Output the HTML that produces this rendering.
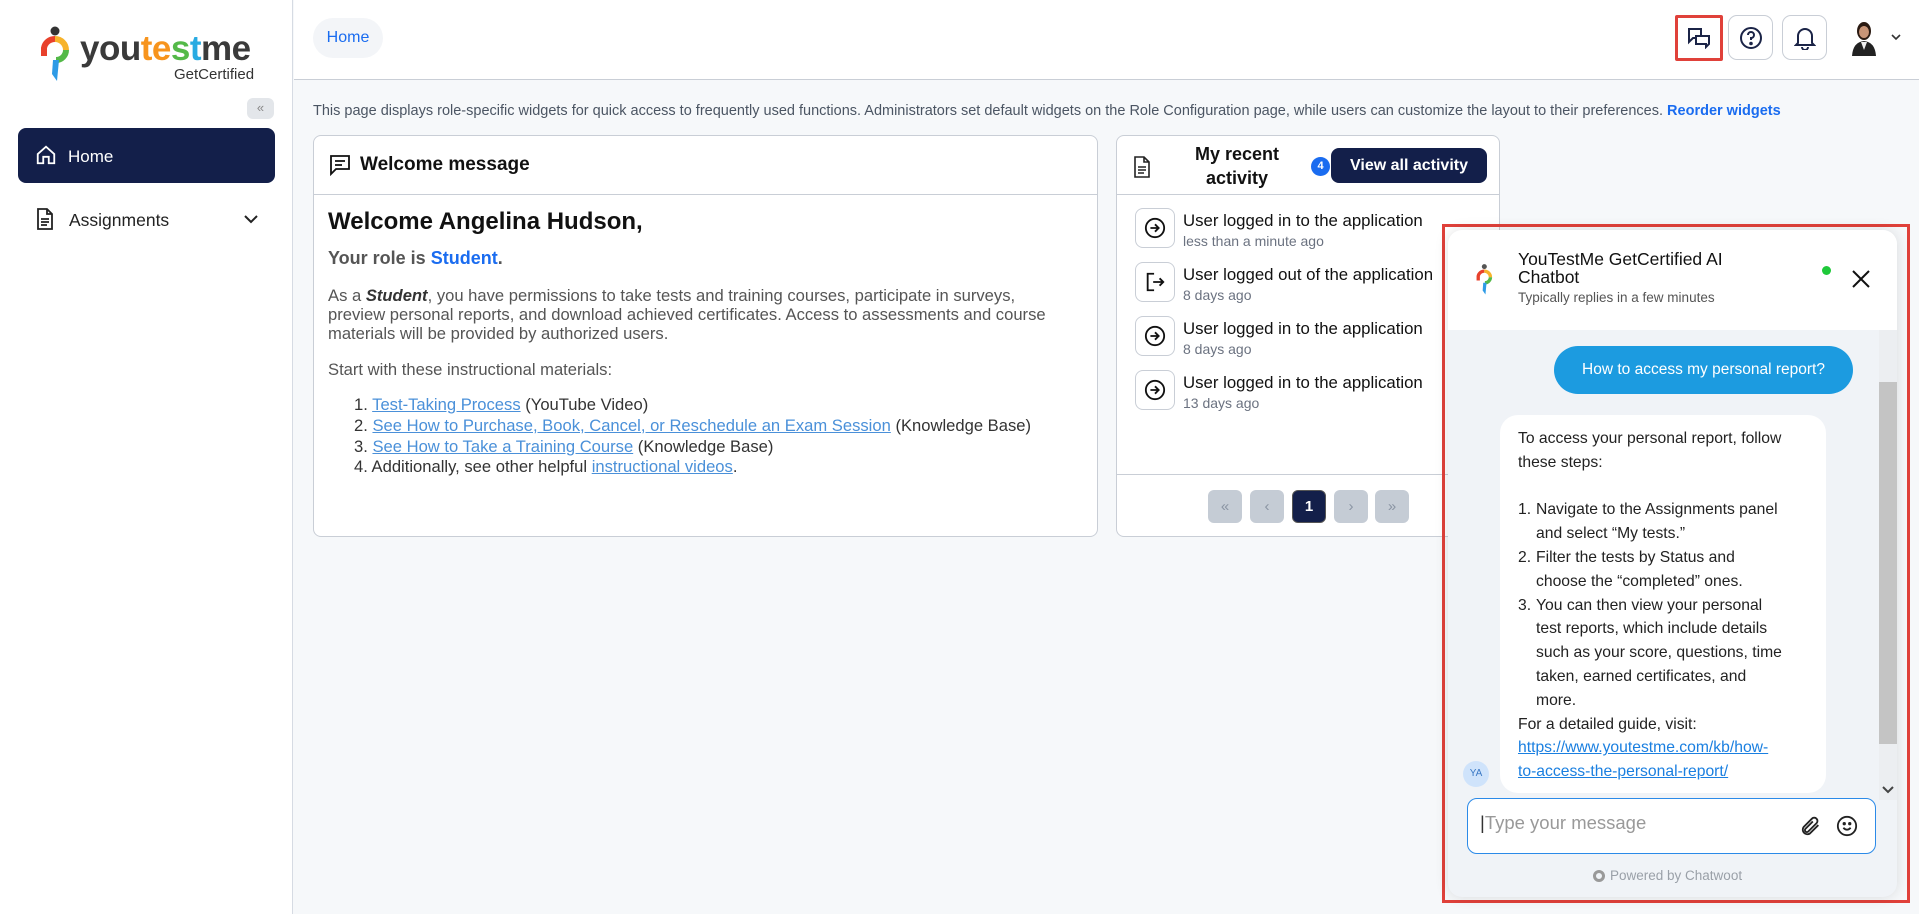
<!DOCTYPE html>
<html><head><meta charset="utf-8"><style>
*{box-sizing:border-box;margin:0;padding:0}
body{width:1919px;height:914px;overflow:hidden;background:#f6f8fa;font-family:"Liberation Sans",Arial,sans-serif;color:#111;position:relative}
.abs{position:absolute}
a{color:#4a90d9;text-decoration:underline}
.side{left:0;top:0;width:293px;height:914px;background:#fff;border-right:1px solid #d6dbe3}
.hdr{left:294px;top:0;right:0;height:80px;background:#fff;border-bottom:1px solid #c9ced6}
.ib{width:45px;height:45px;border:1px solid #c9ced6;border-radius:9px;background:#fff;display:flex;align-items:center;justify-content:center}
.card{background:#fff;border:1px solid #c9ced6;border-radius:8px}
.act{position:absolute;left:18px}
.act .bx{position:absolute;left:0;top:0;width:40px;height:40px;border:1px solid #c9ced6;border-radius:8px;display:flex;align-items:center;justify-content:center}
.act .t{position:absolute;left:48px;top:3px;font-size:16.8px;white-space:nowrap;color:#111}
.act .s{position:absolute;left:48px;top:25px;font-size:14px;color:#6b7280;white-space:nowrap}
.pg{position:absolute;top:490px;width:34px;height:33px;border-radius:6px;background:#c5ccd5;color:#8a94a3;display:flex;align-items:center;justify-content:center;font-size:15px}
.li{display:flex}.li span:first-child{width:18px;flex:none}
</style></head><body>
<div class="abs side">
  <svg class="abs" style="left:40px;top:26px" width="36" height="58" viewBox="0 0 36 58"><circle cx="15" cy="5" r="4.5" fill="#333"/><path d="M4 30 V22 A11 11 0 0 1 15 13" stroke="#e8412c" stroke-width="6" fill="none"/><path d="M15 13 A11 11 0 0 1 26 24" stroke="#f7b32b" stroke-width="6" fill="none"/><path d="M26 24 A10 10 0 0 1 16 34" stroke="#54b948" stroke-width="6" fill="none"/><path d="M13 34 L19 34 L17 55 L12 48Z" fill="#2e9be6"/></svg>
  <div class="abs" style="left:80px;top:29px;font-size:35px;font-weight:bold;letter-spacing:-0.5px;color:#3a3a3a">you<span style="color:#f7941d">te</span><span style="color:#54b948">s</span><span style="color:#29abe2">t</span>me</div>
  <div class="abs" style="left:174px;top:66px;font-size:15px;color:#333">GetCertified</div>
  <div class="abs" style="left:247px;top:98px;width:27px;height:21px;background:#e3e6ea;border-radius:6px;color:#888;font-size:13px;text-align:center;line-height:20px">«</div>
  <div class="abs" style="left:18px;top:128px;width:257px;height:55px;background:#131f4a;border-radius:8px"></div>
  <svg class="abs" style="left:35px;top:144px" width="22" height="22" viewBox="0 0 24 24" fill="none" stroke="#fff" stroke-width="2"><path d="M3 11 L12 3 L21 11 V21 H15 V14 H9 V21 H3Z"/></svg>
  <div class="abs" style="left:68px;top:147px;color:#fff;font-size:17px">Home</div>
  <svg class="abs" style="left:35px;top:208px" width="20" height="22" viewBox="0 0 20 22" fill="none" stroke="#222" stroke-width="1.8"><path d="M3 1 H12 L17 6 V21 H3Z M12 1 V6 H17 M6 11 H14 M6 14 H14 M6 17 H12"/></svg>
  <div class="abs" style="left:69px;top:210px;font-size:17.5px;color:#222">Assignments</div>
  <svg class="abs" style="left:243px;top:214px" width="16" height="10" viewBox="0 0 16 10" fill="none" stroke="#222" stroke-width="2"><path d="M2 2 L8 8 L14 2"/></svg>
</div>
<div class="abs hdr"></div>
<div class="abs" style="left:313px;top:18px;width:70px;height:40px;background:#f3f5f8;border-radius:20px;color:#1a6cf0;font-size:16px;text-align:center;line-height:40px">Home</div>
<div class="abs ib" style="left:1675px;top:15px;border:3px solid #e0413a;border-radius:2px;width:48px;height:46px"><svg width="24" height="22" viewBox="0 0 24 22" fill="none" stroke="#1b2447" stroke-width="2"><path d="M2 2 H14 V11 H6 L2 15Z"/><path d="M9 9 H22 V17 L19 20 V17 H9Z" fill="#fff"/></svg></div>
<div class="abs ib" style="left:1728px;top:15px"><svg width="24" height="24" viewBox="0 0 24 24" fill="none" stroke="#1b2447" stroke-width="2"><circle cx="12" cy="12" r="10"/><path d="M9 9 A3 3 0 1 1 12 12 V14"/><circle cx="12" cy="17.5" r="0.8" fill="#1b2447"/></svg></div>
<div class="abs ib" style="left:1782px;top:15px"><svg width="22" height="24" viewBox="0 0 22 24" fill="none" stroke="#1b2447" stroke-width="2"><path d="M4 17 V10 A7 7 0 0 1 18 10 V17 L20 19 H2Z M8 21 A3 3 0 0 0 14 21"/></svg></div>
<svg class="abs" style="left:1850px;top:20px" width="28" height="36" viewBox="0 0 28 36"><ellipse cx="14" cy="11" rx="7" ry="9" fill="#2a1a12"/><ellipse cx="14" cy="12" rx="5" ry="6" fill="#c99577"/><path d="M2 36 Q3 22 14 21 Q25 22 26 36Z" fill="#222"/><path d="M11 22 L14 30 L17 22Z" fill="#eee"/></svg>
<svg class="abs" style="left:1891px;top:34px" width="10" height="7" viewBox="0 0 10 7" fill="none" stroke="#333" stroke-width="1.6"><path d="M1 1 L5 5 L9 1"/></svg>
<div class="abs" style="left:313px;top:103px;font-size:14.5px;color:#4b5563;white-space:nowrap">This page displays role-specific widgets for quick access to frequently used functions. Administrators set default widgets on the Role Configuration page, while users can customize the layout to their preferences. <span style="color:#1a6cf0;font-weight:bold">Reorder widgets</span></div>

<div class="abs card" style="left:313px;top:135px;width:785px;height:402px">
  <div style="height:59px;border-bottom:1px solid #c9ced6;position:relative">
    <svg class="abs" style="left:15px;top:18px" width="22" height="22" viewBox="0 0 22 22" fill="none" stroke="#111" stroke-width="1.8"><path d="M2 2 H20 V15 H7 L2 20Z M6 7 H16 M6 11 H13"/></svg>
    <div class="abs" style="left:46px;top:18px;font-size:19px;font-weight:bold">Welcome message</div>
  </div>
  <div class="abs" style="left:14px;top:72px;font-size:24px;font-weight:bold;color:#111">Welcome Angelina Hudson,</div>
  <div class="abs" style="left:14px;top:112px;font-size:18px;font-weight:bold;color:#555">Your role is <span style="color:#1a6cf0">Student</span>.</div>
  <div class="abs" style="left:14px;top:150px;width:745px;font-size:16.6px;line-height:19px;color:#555">As a <b><i style="color:#333">Student</i></b>, you have permissions to take tests and training courses, participate in surveys, preview personal reports, and download achieved certificates. Access to assessments and course materials will be provided by authorized users.</div>
  <div class="abs" style="left:14px;top:224px;font-size:16.6px;color:#555">Start with these instructional materials:</div>
  <div class="abs" style="left:40px;top:259px;font-size:16.6px;line-height:20.8px;color:#333">
    <div>1. <a>Test-Taking Process</a> (YouTube Video)</div>
    <div>2. <a>See How to Purchase, Book, Cancel, or Reschedule an Exam Session</a> (Knowledge Base)</div>
    <div>3. <a>See How to Take a Training Course</a> (Knowledge Base)</div>
    <div>4. Additionally, see other helpful <a>instructional videos</a>.</div>
  </div>
</div>

<div class="abs card" style="left:1116px;top:135px;width:384px;height:402px">
  <div style="height:59px;border-bottom:1px solid #c9ced6;position:relative">
    <svg class="abs" style="left:16px;top:20px" width="18" height="22" viewBox="0 0 18 22" fill="none" stroke="#222" stroke-width="1.6"><path d="M2 1 H11 L16 6 V21 H2Z M11 1 V6 H16 M5 11 H13 M5 14 H13 M5 17 H11"/></svg>
    <div class="abs" style="left:50px;top:6px;width:140px;text-align:center;font-size:18px;font-weight:bold;line-height:24px">My recent<br>activity</div>
    <div class="abs" style="left:194px;top:21px;width:19px;height:19px;border-radius:50%;background:#1a6cf0;color:#fff;font-size:11px;font-weight:bold;text-align:center;line-height:19px">4</div>
    <div class="abs" style="left:214px;top:12px;width:156px;height:35px;border-radius:8px;background:#131f4a;color:#fff;font-size:16px;font-weight:bold;text-align:center;line-height:35px">View all activity</div>
  </div>
  <div class="act" style="top:72px"><div class="bx"><svg width="22" height="22" viewBox="0 0 24 24" fill="none" stroke="#111" stroke-width="2"><circle cx="12" cy="12" r="10"/><path d="M7 12 H16 M12 8 L16 12 L12 16"/></svg></div><div class="t">User logged in to the application</div><div class="s">less than a minute ago</div></div>
  <div class="act" style="top:126px"><div class="bx"><svg width="22" height="22" viewBox="0 0 24 24" fill="none" stroke="#111" stroke-width="2"><path d="M11 3 H4 V21 H11 M10 12 H21 M17 8 L21 12 L17 16"/></svg></div><div class="t">User logged out of the application</div><div class="s">8 days ago</div></div>
  <div class="act" style="top:180px"><div class="bx"><svg width="22" height="22" viewBox="0 0 24 24" fill="none" stroke="#111" stroke-width="2"><circle cx="12" cy="12" r="10"/><path d="M7 12 H16 M12 8 L16 12 L12 16"/></svg></div><div class="t">User logged in to the application</div><div class="s">8 days ago</div></div>
  <div class="act" style="top:234px"><div class="bx"><svg width="22" height="22" viewBox="0 0 24 24" fill="none" stroke="#111" stroke-width="2"><circle cx="12" cy="12" r="10"/><path d="M7 12 H16 M12 8 L16 12 L12 16"/></svg></div><div class="t">User logged in to the application</div><div class="s">13 days ago</div></div>
  <div class="abs" style="left:0;right:0;top:338px;border-top:1px solid #c9ced6"></div>
</div>
<div class="pg" style="left:1208px">«</div>
<div class="pg" style="left:1250px">‹</div>
<div class="pg" style="left:1292px;background:#131f4a;color:#fff;font-weight:bold;border:1px solid #555">1</div>
<div class="pg" style="left:1334px">›</div>
<div class="pg" style="left:1375px">»</div>

<div class="abs" style="left:1442px;top:224px;width:468px;height:679px;border:3px solid #e0413a"></div>
<div class="abs" style="left:1448px;top:230px;width:449px;height:667px;background:#f0f3f7;border-radius:14px;overflow:hidden;box-shadow:0 0 14px rgba(0,0,0,.12)">
  <div class="abs" style="left:0;top:0;width:449px;height:100px;background:#fff"></div>
  <svg class="abs" style="left:28px;top:33px" width="20" height="34" viewBox="0 0 36 58"><circle cx="15" cy="5" r="4.5" fill="#555"/><path d="M4 30 V22 A11 11 0 0 1 15 13" stroke="#e8412c" stroke-width="6" fill="none"/><path d="M15 13 A11 11 0 0 1 26 24" stroke="#f7b32b" stroke-width="6" fill="none"/><path d="M26 24 A10 10 0 0 1 16 34" stroke="#54b948" stroke-width="6" fill="none"/><path d="M13 34 L19 34 L17 55 L12 48Z" fill="#2e9be6"/></svg>
  <div class="abs" style="left:70px;top:20px;font-size:17.5px;line-height:18px;color:#111">YouTestMe GetCertified AI<br>Chatbot</div>
  <div class="abs" style="left:70px;top:60px;font-size:13.5px;color:#555">Typically replies in a few minutes</div>
  <div class="abs" style="left:374px;top:36px;width:9px;height:9px;border-radius:50%;background:#1fc93a"></div>
  <svg class="abs" style="left:404px;top:40px" width="18" height="18" viewBox="0 0 18 18" stroke="#111" stroke-width="2"><path d="M1 1 L17 17 M17 1 L1 17"/></svg>
  <div class="abs" style="left:431px;top:100px;width:18px;height:470px;background:#eceef1"></div>
  <div class="abs" style="left:431px;top:152px;width:18px;height:362px;background:#c4c4c4"></div>
  <svg class="abs" style="left:434px;top:556px" width="12" height="8" viewBox="0 0 12 8" fill="none" stroke="#444" stroke-width="2"><path d="M1 1 L6 6 L11 1"/></svg>
  <div class="abs" style="left:106px;top:116px;width:299px;height:48px;border-radius:24px;background:#1c9be0;color:#fff;font-size:15.5px;text-align:center;line-height:48px">How to access my personal report?</div>
  <div class="abs" style="left:52px;top:185px;width:326px;height:378px;background:#fff;border-radius:18px;font-size:15.7px;line-height:23.8px;color:#222;padding:12px 18px">
    To access your personal report, follow<br>these steps:<br><br>
    <div class="li"><span>1.</span><span>Navigate to the Assignments panel<br>and select “My tests.”</span></div>
    <div class="li"><span>2.</span><span>Filter the tests by Status and<br>choose the “completed” ones.</span></div>
    <div class="li"><span>3.</span><span>You can then view your personal<br>test reports, which include details<br>such as your score, questions, time<br>taken, earned certificates, and<br>more.</span></div>
    For a detailed guide, visit:<br><a style="color:#1a7fe0">https://www.youtestme.com/kb/how-<br>to-access-the-personal-report/</a>
  </div>
  <div class="abs" style="left:15px;top:531px;width:26px;height:26px;border-radius:50%;background:#cfe3fb;color:#3a78c4;font-size:10px;text-align:center;line-height:26px">YA</div>
  <div class="abs" style="left:19px;top:568px;width:409px;height:56px;background:#fff;border:1.5px solid #2b8ae8;border-radius:10px"></div>
  <div class="abs" style="left:32px;top:582px;font-size:18.5px;color:#999"><span style="color:#333;font-weight:100">|</span>Type your message</div>
  <svg class="abs" style="left:352px;top:585px" width="22" height="22" viewBox="0 0 24 24" fill="none" stroke="#222" stroke-width="2"><path d="M20 11 L11 20 A5 5 0 0 1 4 13 L13 4 A3.5 3.5 0 0 1 18 9 L9 18 A1.8 1.8 0 0 1 6 15 L14 7"/></svg>
  <svg class="abs" style="left:388px;top:585px" width="22" height="22" viewBox="0 0 24 24" fill="none" stroke="#222" stroke-width="2"><circle cx="12" cy="12" r="10"/><path d="M8 14 Q12 18 16 14"/><circle cx="9" cy="9.5" r="0.8" fill="#222"/><circle cx="15" cy="9.5" r="0.8" fill="#222"/></svg>
  <div class="abs" style="left:145px;top:640px;width:12px;height:12px;border-radius:50%;border:3px solid #999"></div>
  <div class="abs" style="left:162px;top:638px;font-size:13.5px;color:#9aa0a8">Powered by Chatwoot</div>
</div>
</body></html>
